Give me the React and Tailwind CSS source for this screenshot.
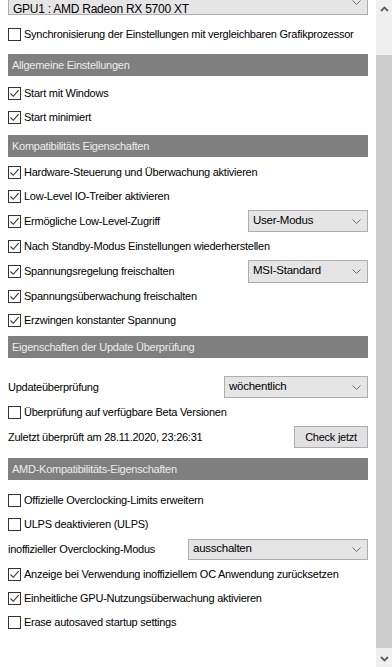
function Box({ checked }) {
  return (
    <span className="w-[13px] h-[13px] border border-[#333333] bg-white flex items-center justify-center shrink-0">
      {checked && (
        <svg width="11" height="11" viewBox="0 0 11 11">
          <path d="M1.5 5.5 L4.3 8.3 L9.6 2.2" fill="none" stroke="#333333" strokeWidth="1.1" />
        </svg>
      )}
    </span>
  );
}

function Chevron() {
  return (
    <svg width="9" height="5" viewBox="0 0 9 5" className="shrink-0">
      <path d="M0.5 0.5 L4.5 4.5 L8.5 0.5" fill="none" stroke="#6d6d6d" strokeWidth="1" />
    </svg>
  );
}

function Select({ value, className }) {
  return (
    <div className={`flex items-center justify-between bg-[#e5e5e5] border border-[#adadad] pl-[4px] pr-[6px] ${className}`}>
      <span>{value}</span>
      <Chevron />
    </div>
  );
}

function Check({ label, checked, h = "h-[24px]", children }) {
  return (
    <div className={`flex items-center ${h}`}>
      <Box checked={checked} />
      <span className="ml-[3px] flex-1">{label}</span>
      {children}
    </div>
  );
}

function Header({ title, className = "" }) {
  return (
    <div className={`h-[22px] bg-[#7f7f7f] text-[#ececec] flex items-center pl-[4px] ${className}`}>
      {title}
    </div>
  );
}

export default function App() {
  return (
    <div className="w-[392px] h-[667px] overflow-hidden bg-white flex font-['Liberation_Sans',Arial,sans-serif] text-[11px] tracking-[-0.25px] text-black">
      <div className="w-[376px] px-[8px] flex flex-col">
        <Select value="GPU1 : AMD Radeon RX 5700 XT" className="h-[22px] -mt-[7px] pt-[6px] items-start text-[12px]" />

        <div className="mt-[7px]">
          <Check label="Synchronisierung der Einstellungen mit vergleichbaren Grafikprozessor" />
        </div>

        <Header title="Allgemeine Einstellungen" className="mt-[8px]" />
        <div className="mt-[5px]">
          <Check label="Start mit Windows" checked />
          <Check label="Start minimiert" checked />
        </div>

        <Header title="Kompatibilitäts Eigenschaften" className="mt-[6px]" />
        <div className="mt-[3px]">
          <Check label="Hardware-Steuerung und Überwachung aktivieren" checked />
          <Check label="Low-Level IO-Treiber aktivieren" checked />
          <Check label="Ermögliche Low-Level-Zugriff" checked h="h-[26px]">
            <Select value="User-Modus" className="w-[120px] h-[22px] text-[11.5px]" />
          </Check>
          <Check label="Nach Standby-Modus Einstellungen wiederherstellen" checked />
          <Check label="Spannungsregelung freischalten" checked h="h-[26px]">
            <Select value="MSI-Standard" className="w-[120px] h-[23px] text-[11.5px]" />
          </Check>
          <Check label="Spannungsüberwachung freischalten" checked />
          <Check label="Erzwingen konstanter Spannung" checked />
        </div>

        <Header title="Eigenschaften der Update Überprüfung" className="mt-[4px]" />
        <div className="mt-[16px]">
          <div className="flex items-center justify-between h-[26px]">
            <span>Updateüberprüfung</span>
            <Select value="wöchentlich" className="w-[144px] h-[22px] text-[11.5px]" />
          </div>
          <Check label="Überprüfung auf verfügbare Beta Versionen" />
          <div className="flex items-center justify-between h-[26px]">
            <span>Zuletzt überprüft am 28.11.2020, 23:26:31</span>
            <button className="w-[74px] h-[22px] bg-[#e1e1e1] border border-[#adadad] text-[11px] flex items-center justify-center">
              Check jetzt
            </button>
          </div>
        </div>

        <Header title="AMD-Kompatibilitäts-Eigenschaften" className="mt-[8px]" />
        <div className="mt-[8px]">
          <Check label="Offizielle Overclocking-Limits erweitern" />
          <Check label="ULPS deaktivieren (ULPS)" />
          <div className="flex items-center justify-between h-[26px]">
            <span>inoffizieller Overclocking-Modus</span>
            <Select value="ausschalten" className="w-[180px] h-[21px] text-[11.5px]" />
          </div>
          <Check label="Anzeige bei Verwendung inoffiziellem OC Anwendung zurücksetzen" checked />
          <Check label="Einheitliche GPU-Nutzungsüberwachung aktivieren" checked />
          <Check label="Erase autosaved startup settings" />
        </div>
      </div>

      <div className="w-[16px] bg-[#f0f0f0] flex flex-col">
        <div className="h-[17px] flex items-center justify-center">
          <svg width="9" height="6" viewBox="0 0 9 6">
            <path d="M1 5 L4.5 1.5 L8 5" fill="none" stroke="#606060" strokeWidth="1.8" />
          </svg>
        </div>
        <div className="flex-1 flex flex-col pt-[38px] pb-[2px]">
          <div className="flex-1 bg-[#cdcdcd]" />
        </div>
        <div className="h-[17px] flex items-center justify-center">
          <svg width="9" height="6" viewBox="0 0 9 6">
            <path d="M1 1 L4.5 4.5 L8 1" fill="none" stroke="#606060" strokeWidth="1.8" />
          </svg>
        </div>
      </div>
    </div>
  );
}
